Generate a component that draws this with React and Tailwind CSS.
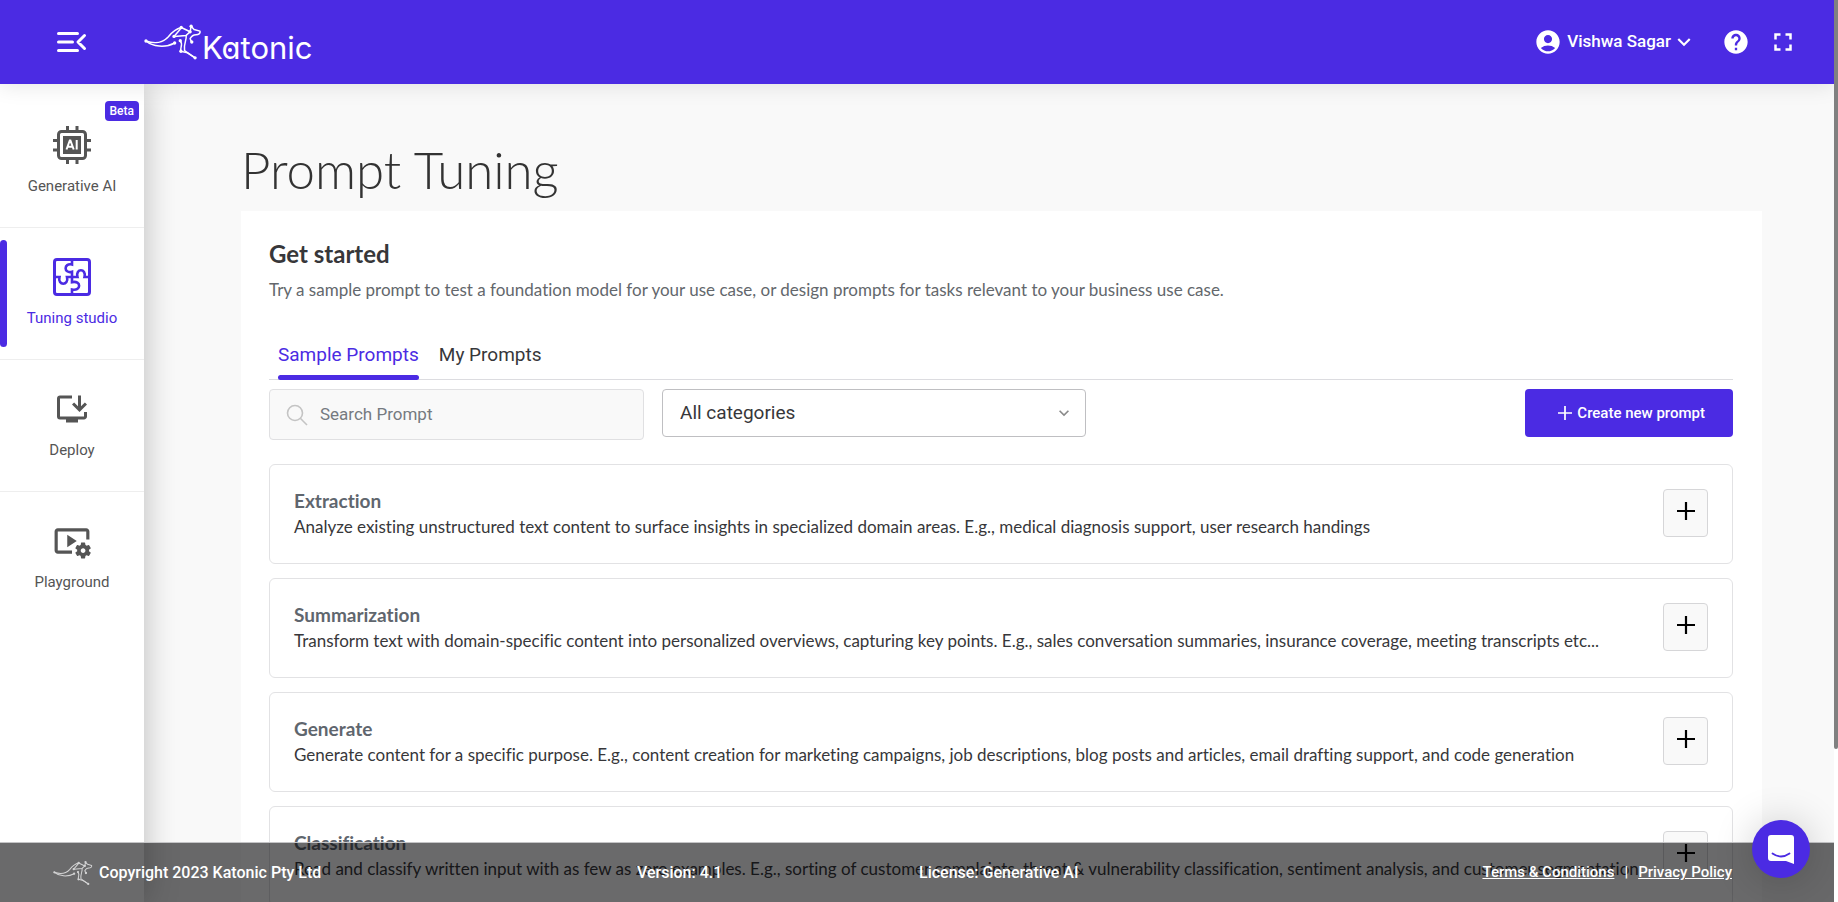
import React, { useState } from 'react';
import { MdAccountCircle, MdFullscreen, MdHelp, MdInstallDesktop, MdKeyboardArrowDown, MdVideoSettings } from 'react-icons/md';

const prompts = [
    {
        title: 'Extraction',
        description: 'Analyze existing unstructured text content to surface insights in specialized domain areas. E.g., medical diagnosis support, user research handings',
    },
    {
        title: 'Summarization',
        description: 'Transform text with domain-specific content into personalized overviews, capturing key points. E.g., sales conversation summaries, insurance coverage, meeting transcripts etc...',
    },
    {
        title: 'Generate',
        description: 'Generate content for a specific purpose. E.g., content creation for marketing campaigns, job descriptions, blog posts and articles, email drafting support, and code generation',
    },
    {
        title: 'Classification',
        description: 'Read and classify written input with as few as zero examples. E.g., sorting of customer complaints, threat & vulnerability classification, sentiment analysis, and customer segmentation',
    },
];

const Kangaroo = ({ className }) => (
    <svg className={className} viewBox="40 40 176 108" fill="none" stroke="currentColor" strokeWidth="4.500" strokeLinecap="round" strokeLinejoin="round">
        <path d="M46 91 C72 100 98 96 114 78 C126 63 136 54 153 50 L180 63" />
        <path d="M46 91 C66 108 104 113 133 97" />
        <path d="M131 77 L168 74 L180 63 L183 46 L192 56 L210 61 C212 68 205 72 198 72 C190 72 183 78 180 84 L185 95" />
        <path d="M131 77 L150 55" />
        <path d="M168 74 C170 90 160 96 163 120 L195 142" />
        <path d="M150 90 C160 102 148 112 152 122 L172 127 L195 142" />
        <g fill="currentColor" stroke="none">
            <circle cx="46" cy="91" r="5" />
            <circle cx="153" cy="50" r="5" />
            <circle cx="183" cy="46" r="5" />
            <circle cx="180" cy="63" r="5" />
            <circle cx="131" cy="77" r="5" />
            <circle cx="133" cy="97" r="5" />
            <circle cx="150" cy="90" r="5" />
            <circle cx="185" cy="94" r="5" />
            <circle cx="152" cy="122" r="5" />
            <circle cx="195" cy="142" r="5" />
        </g>
    </svg>
);

const MenuIcon = () => (
    <svg className="w-8 h-8" viewBox="0 0 32 32" fill="none" stroke="currentColor" strokeWidth="3" strokeLinecap="round" strokeLinejoin="round">
        <path d="M2.500 7.500H21.500M2.500 16H16.500M2.500 24.500H21.500M28.500 9.500L22 16L28.500 22.500" />
    </svg>
);

const ChipIcon = () => (
    <svg className="w-[38px] h-[38px]" viewBox="0 0 38 38" fill="none" stroke="currentColor">
        <rect x="5.500" y="5.500" width="27" height="27" rx="3" strokeWidth="3" />
        <path strokeWidth="3" d="M14.500 0V5M24 0V5M14.500 33V38M24 33V38M0 14.500H5M0 24H5M33 14.500H38M33 24H38" />
        <rect x="10" y="10" width="18" height="18" fill="currentColor" stroke="none" />
        <path stroke="#fff" strokeWidth="2" d="M13.500 23.500L16.800 14.500H17.400L20.700 23.500M14.800 20.800H19.500M23.700 14V23.500" />
    </svg>
);

const PuzzleIcon = () => (
    <svg className="w-[38px] h-[38px]" viewBox="0 0 38 38" fill="none" stroke="currentColor" strokeWidth="2.600">
        <rect x="1.500" y="1.500" width="35" height="35" rx="2.500" strokeWidth="3" />
        <path d="M19 2V6.500C10.500 4.500 10.500 16 19 13.800V24.200C28.500 22 28.500 33.500 19 31.500V36" />
        <path d="M2 19H6.500C4.300 28 16.200 28 14 19H24.500C22 10 33.800 10 31.500 19H36" />
    </svg>
);

const SearchIcon = () => (
    <svg className="w-[22px] h-[22px] shrink-0 text-[#c4c4c4]" viewBox="0 0 22 22" fill="none" stroke="currentColor" strokeWidth="1.600">
        <circle cx="9" cy="9" r="7.500" />
        <path d="M14.300 14.300L21 21" />
    </svg>
);

const PlusIcon = ({ className }) => (
    <svg className={className} viewBox="0 0 18 18" fill="none" stroke="currentColor" strokeWidth="2.200">
        <path d="M9 0V18M0 9H18" />
    </svg>
);

const ChatIcon = () => (
    <svg className="w-[30px] h-[30px]" viewBox="0 0 30 30" fill="none">
        <path fill="#fff" d="M5 1H25Q28 1 28 4V30L20 27H5Q2 27 2 24V4Q2 1 5 1Z" />
        <path stroke="#4b2be3" strokeWidth="1.800" strokeLinecap="round" d="M6.500 19.500Q15 25.500 23.500 19.500" />
    </svg>
);

const menuItems = [
    { label: 'Generative AI', icon: <ChipIcon />, badge: 'Beta' },
    { label: 'Tuning studio', icon: <PuzzleIcon /> },
    { label: 'Deploy', icon: <MdInstallDesktop size={36} /> },
    { label: 'Playground', icon: <MdVideoSettings size={38} /> },
];

const Header = () => (
    <header className="relative z-20 flex items-center justify-between h-21 shrink-0 pl-14 pr-9 bg-[#4b2be3] text-white shadow-[0_2px_20px_rgba(0,0,0,0.1)]">
        <div className="flex items-center gap-14">
            <button type="button" aria-label="Toggle menu">
                <MenuIcon />
            </button>
            <a href="#" aria-label="Katonic" className="flex items-center">
                <Kangaroo className="w-[58px] h-9" />
                <span className="mt-3 font-['Inter',sans-serif] text-[31px] leading-8 [font-feature-settings:'cv11']">
                    K
                    <span className="relative">
                        a
                        <span className="absolute left-1/3 top-1/2 w-1 h-1 rounded-full bg-white"></span>
                    </span>
                    tonic
                </span>
            </a>
        </div>

        <div className="flex items-center">
            <button type="button" className="flex items-center text-[17px] font-medium">
                <MdAccountCircle size={28} />
                <span className="ml-[5px]">Vishwa Sagar</span>
                <MdKeyboardArrowDown size={26} />
            </button>
            <button type="button" aria-label="Help" className="ml-[25px]">
                <MdHelp size={28} />
            </button>
            <button type="button" aria-label="Full screen" className="ml-4.5">
                <MdFullscreen size={30} />
            </button>
        </div>
    </header>
);

const Sidebar = ({ active, onSelect }) => (
    <nav className="relative z-10 w-36 shrink-0 pt-3 bg-white shadow-[0_0_32px_rgba(0,0,0,0.25)]">
        {menuItems.map(item => (
            <button
                key={item.label}
                type="button"
                onClick={() => onSelect(item.label)}
                className={`relative flex flex-col items-center w-full h-33 pt-[30px] border-b border-[#eeeeee] last:border-b-0 text-[15px] ${active === item.label ? 'text-[#4b2be3]' : 'text-[#555555]'}`}
            >
                {active === item.label && <span className="absolute left-0 inset-y-3 w-[7px] rounded bg-[#4b2be3]"></span>}
                {item.badge && (
                    <span className="absolute right-[5px] top-[5px] h-5 px-[5px] rounded bg-[#4b2be3] text-xs leading-5 font-medium text-white">
                        {item.badge}
                    </span>
                )}
                <span className="flex items-center h-[38px]">{item.icon}</span>
                <span className="mt-3 leading-5">{item.label}</span>
            </button>
        ))}
    </nav>
);

const PromptCard = ({ title, description }) => (
    <li className="flex items-start justify-between h-25 px-6 pt-6 border border-[#e2e2e4] rounded-md">
        <div>
            <h3 className="text-[19px] leading-6 font-bold text-[#5f666e]">{title}</h3>
            <p className="text-[17px] leading-7 text-[#37373a]">{description}</p>
        </div>
        <button
            type="button"
            aria-label={`Use ${title}`}
            className="flex justify-center w-[45px] h-12 shrink-0 pt-3 border border-[#d6d6d8] rounded bg-[#f9f9f9] text-black"
        >
            <PlusIcon className="w-[18px] h-[18px]" />
        </button>
    </li>
);

const Footer = () => (
    <footer className="absolute inset-x-0 bottom-0 z-30 flex items-center h-15 border-t border-[#c4c4c6] pl-[53px] pr-[102px] bg-[#010104]/59 bg-clip-padding text-base font-medium text-white">
        <div className="flex items-center w-146">
            <Kangaroo className="w-10 h-7 mr-[6px] opacity-70" />
            Copyright 2023 Katonic Pty Ltd
        </div>
        <div className="w-[282px]">Version: 4.1</div>
        <div>License: Generative AI</div>
        <div className="flex gap-[10px] ml-auto text-[15px]">
            <a href="#" className="underline">Terms &amp; Conditions</a>
            <span>|</span>
            <a href="#" className="underline">Privacy Policy</a>
        </div>
    </footer>
);

const App = () => {
    const [active, setActive] = useState('Tuning studio');
    const [tab, setTab] = useState('Sample Prompts');

    return (
        <div className="flex h-screen bg-[#f9f9f9] font-['Roboto',sans-serif]">
            <div className="relative flex flex-col flex-1 min-w-0 overflow-hidden">
                <Header />

                <div className="flex flex-1 min-h-0">
                    <Sidebar active={active} onSelect={setActive} />

                    <main className="flex-1 min-w-0 pl-[97px] pr-18 pt-14 overflow-hidden [font-variant-ligatures:none]">
                        <h1 className="font-['Lato',sans-serif] text-[51px] leading-15 font-light text-[#333333]">Prompt Tuning</h1>

                        <section className="mt-[11px] pl-7 pr-[29px] pt-7 pb-20 bg-white">
                            <h2 className="font-['Lato',sans-serif] text-2xl leading-[30px] font-bold text-[#37373a]">Get started</h2>
                            <p className="mt-[7px] font-['Lato',sans-serif] text-[17px] leading-7 text-[#63676c]">
                                Try a sample prompt to test a foundation model for your use case, or design prompts for tasks relevant to your business use case.
                            </p>

                            <div role="tablist" className="flex gap-5 mt-[23px] pl-[9px] border-b border-[#dcdce0]">
                                {['Sample Prompts', 'My Prompts'].map(name => (
                                    <button
                                        key={name}
                                        type="button"
                                        role="tab"
                                        aria-selected={tab === name}
                                        onClick={() => setTab(name)}
                                        className={`relative h-13 pt-1 text-[19px] ${tab === name ? 'text-[#4b2be3]' : 'text-[#37373a]'}`}
                                    >
                                        {name}
                                        {tab === name && <span className="absolute inset-x-0 -bottom-px h-[5px] rounded bg-[#4b2be3]"></span>}
                                    </button>
                                ))}
                            </div>

                            <div className="flex items-start mt-[9px]">
                                <label className="flex items-center gap-3 w-[375px] h-[51px] pl-4 border border-[#e0e0e2] rounded bg-[#f9f9f9]">
                                    <SearchIcon />
                                    <input
                                        type="text"
                                        aria-label="Search Prompt"
                                        placeholder="Search Prompt"
                                        className="w-full bg-transparent outline-none text-[17px] text-[#37373a] placeholder:text-[#757a80]"
                                    />
                                </label>
                                <div className="relative w-106 ml-[18px]">
                                    <select
                                        aria-label="Category"
                                        className="w-full h-12 pl-[17px] appearance-none border border-[#bfbfc2] rounded bg-white text-[19px] text-[#37373a]"
                                    >
                                        <option>All categories</option>
                                    </select>
                                    <MdKeyboardArrowDown size={20} className="absolute right-3 top-[14px] text-[#8a8a8a] pointer-events-none" />
                                </div>
                                <button type="button" className="flex items-center gap-[5px] h-12 ml-auto pl-[33px] pr-7 rounded bg-[#4b2be3] text-[15px] font-medium text-white">
                                    <PlusIcon className="w-[14px] h-[14px]" />
                                    Create new prompt
                                </button>
                            </div>

                            <ul className="flex flex-col gap-[14px] mt-6 font-['Lato',sans-serif]">
                                {prompts.map(prompt => (
                                    <PromptCard key={prompt.title} title={prompt.title} description={prompt.description} />
                                ))}
                            </ul>
                        </section>
                    </main>
                </div>

                <Footer />

                <button
                    type="button"
                    aria-label="Open chat"
                    className="absolute right-6 bottom-6 z-40 flex items-center justify-center w-[58px] h-[58px] rounded-full bg-[#4b2be3] shadow-[0_2px_40px_rgba(0,0,0,0.2)]"
                >
                    <ChatIcon />
                </button>
            </div>

            {/* Scroll track */}
            <div className="w-1 shrink-0 bg-white">
                <div className="h-[83%] rounded-b bg-[#808080]"></div>
            </div>
        </div>
    );
};

export default App;
